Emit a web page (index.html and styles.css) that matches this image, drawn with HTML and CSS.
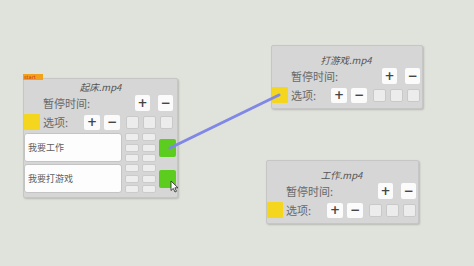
FILE: index.html
```html
<!DOCTYPE html>
<html lang="zh">
<head>
  <meta charset="UTF-8">
  <meta name="viewport" content="width=device-width, initial-scale=1.0">
  <title>剧情节点</title>
  <link rel="stylesheet" href="styles.css">
</head>
<body>

  <div class="canvas">

    <!-- Start node -->
    <div class="node node-start">
      <span class="start-tag">start</span>
      <div class="node-title">起床.mp4</div>
      <div class="row row-pause">
        <span class="label">暂停时间:</span>
        <span class="btn">+</span>
        <span class="btn">−</span>
      </div>
      <div class="row row-options">
        <span class="port-in"></span>
        <span class="label">选项:</span>
        <span class="btn btn-sm">+</span>
        <span class="btn btn-sm minus">−</span>
        <span class="box first"></span>
        <span class="box"></span>
        <span class="box"></span>
      </div>
      <div class="choices">
        <div class="choice">
          <div class="choice-text">我要工作</div>
          <div class="cells"><i></i><i></i><i></i></div>
          <div class="cells"><i></i><i></i><i></i></div>
          <div class="port-out"></div>
        </div>
        <div class="choice">
          <div class="choice-text">我要打游戏</div>
          <div class="cells"><i></i><i></i><i></i></div>
          <div class="cells"><i></i><i></i><i></i></div>
          <div class="port-out"></div>
        </div>
      </div>
    </div>

    <!-- Game node -->
    <div class="node node-game">
      <div class="node-title">打游戏.mp4</div>
      <div class="row row-pause">
        <span class="label">暂停时间:</span>
        <span class="btn">+</span>
        <span class="btn">−</span>
      </div>
      <div class="row row-options">
        <span class="port-in"></span>
        <span class="label">选项:</span>
        <span class="btn btn-sm">+</span>
        <span class="btn btn-sm minus">−</span>
        <span class="box first"></span>
        <span class="box"></span>
        <span class="box"></span>
      </div>
    </div>

    <!-- Work node -->
    <div class="node node-work">
      <div class="node-title">工作.mp4</div>
      <div class="row row-pause">
        <span class="label">暂停时间:</span>
        <span class="btn">+</span>
        <span class="btn">−</span>
      </div>
      <div class="row row-options">
        <span class="port-in"></span>
        <span class="label">选项:</span>
        <span class="btn btn-sm">+</span>
        <span class="btn btn-sm minus">−</span>
        <span class="box first"></span>
        <span class="box"></span>
        <span class="box"></span>
      </div>
    </div>

    <!-- Connections -->
    <svg class="links" width="474" height="266" viewBox="0 0 474 266">
      <line x1="170" y1="148" x2="279" y2="95" stroke="#8187e6" stroke-width="3" stroke-linecap="round"/>
    </svg>

    <!-- Mouse pointer -->
    <svg class="cursor" width="9" height="13" viewBox="0 0 9 13">
      <path d="M1 1 L1 10.5 L3.3 8.4 L5 12 L6.5 11.3 L4.9 7.8 L8 7.8 Z" fill="#fff" stroke="#333" stroke-width="0.9" stroke-linejoin="round"/>
    </svg>

  </div>

</body>
</html>
```

FILE: styles.css
```css
/* Page */
body {
  margin: 0;
  background-color: #dfe3db;
  font-family: "Noto Sans CJK SC", "Noto Sans", sans-serif;
}

.canvas {
  position: relative;
  width: 474px;
  height: 266px;
  overflow: hidden;
}

/* Nodes are free-placed on the canvas */
.node {
  position: absolute;
  box-sizing: border-box;
  padding: 9px 2px 4px 0;
  background-color: #d6d6d6;
  border: 1px solid #c6c6c6;
  border-radius: 2px;
  box-shadow: 1px 1px 2px rgba(0, 0, 0, 0.18);
}

.node-start {
  left: 23px;
  top: 78px;
  width: 155px;
  padding-top: 3px;
  padding-right: 0;
}

.node-game {
  left: 271px;
  top: 45px;
  width: 152px;
}

.node-work {
  left: 266px;
  top: 160px;
  width: 153px;
}

.start-tag {
  position: absolute;
  left: -1px;
  top: -5px;
  width: 20px;
  height: 6px;
  background-color: #f2a21a;
  color: #c8321e;
  font-family: "DejaVu Sans", sans-serif;
  font-size: 5px;
  line-height: 6px;
  padding-left: 1px;
  box-sizing: border-box;
}

.node-title {
  height: 10px;
  line-height: 10px;
  text-align: center;
  font-size: 9.5px;
  font-style: italic;
  color: #555;
}

/* Rows */
.row {
  display: flex;
  align-items: center;
  height: 18px;
}

.row-pause {
  margin-top: 2px;
  padding-left: 19px;
  gap: 8px;
}

.row-options {
  margin-top: 1px;
}

.node-start .row-pause,
.node-start .row-options {
  padding-right: 4px;
}

.label {
  font-size: 11px;
  color: #686868;
  margin-right: auto;
}

.row-options .label {
  margin-left: 3px;
}

.port-in {
  width: 16px;
  height: 16px;
  background-color: #f4d61e;
  border-radius: 1px;
}

.btn {
  width: 15px;
  height: 16px;
  background-color: #fbfbfb;
  border-radius: 2px;
  color: #454545;
  font-family: "DejaVu Sans", sans-serif;
  font-weight: bold;
  font-size: 12px;
  line-height: 16px;
  text-align: center;
}

.btn-sm {
  width: 16px;
  height: 15px;
  line-height: 15px;
}

.minus {
  margin-left: 4px;
}

.box {
  width: 13px;
  height: 13px;
  box-sizing: border-box;
  margin-left: 4px;
  background-color: #ececec;
  border: 1px solid #c9c9c9;
  border-radius: 2px;
}

.box.first {
  margin-left: 6px;
}

/* Choice rows of the start node */
.choices {
  display: flex;
  flex-direction: column;
  gap: 2px;
  margin-top: 2px;
}

.choice {
  display: flex;
  align-items: center;
  gap: 3px;
  height: 29px;
}

.choice-text {
  box-sizing: border-box;
  width: 98px;
  height: 100%;
  padding-left: 3px;
  background-color: #fdfdfd;
  border: 1px solid #c4c4c4;
  border-radius: 3px;
  font-size: 9px;
  line-height: 27px;
  color: #5e5e5e;
}

.cells {
  display: flex;
  flex-direction: column;
  justify-content: space-between;
  width: 14px;
  height: 100%;
}

.cells i {
  display: block;
  height: 8px;
  box-sizing: border-box;
  background-color: #ededed;
  border: 1px solid #cbcbcb;
  border-radius: 2px;
}

.port-out {
  width: 17px;
  height: 18px;
  background-color: #5ccd1e;
  border-radius: 2px;
}

/* Overlays */
.links {
  position: absolute;
  left: 0;
  top: 0;
  pointer-events: none;
}

.cursor {
  position: absolute;
  left: 170px;
  top: 180px;
}
```
